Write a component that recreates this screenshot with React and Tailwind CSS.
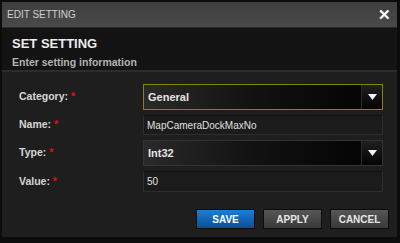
import React from 'react';

const font = { fontFamily: '"Liberation Sans", Arial, sans-serif' };

// Étiquette de champ avec astérisque rouge
const Label = ({ children }) => (
  <div className="w-[141px] pl-[17px] text-[10.5px] font-bold text-[#d6d6d6]">
    {children}: <span className="text-[#e01010]">*</span>
  </div>
);

const Arrow = () => (
  <div className="flex h-full w-[21px] items-center justify-center bg-gradient-to-b from-[#202020] to-[#050505] border-l border-[#2a2a2a]">
    <svg width="9" height="6" viewBox="0 0 9 6">
      <path d="M0 0 H9 L4.5 6 Z" fill="#f2f2f2" />
    </svg>
  </div>
);

const Select = ({ value, active }) => (
  <div
    className={
      'flex h-full w-[240px] items-stretch ' +
      (active ? 'border border-[#8c7e12]' : 'border border-[#333]')
    }
  >
    <div className="flex flex-1 items-center bg-gradient-to-r from-[#2a2a2a] via-[#121212] to-[#050505] pl-[4px] text-[11px] font-bold text-[#e4e4e4]">
      {value}
    </div>
    <Arrow />
  </div>
);

const Input = ({ value }) => (
  <div className="flex h-full w-[240px] items-center border border-[#2e2e2e] border-t-[#111] bg-[#1b1b1b] pl-[3px] text-[10px] text-[#e0e0e0]">
    {value}
  </div>
);

const Button = ({ children, primary }) => (
  <div
    className={
      'flex h-[20px] w-[59px] items-center justify-center border border-[#0c0c0c] text-[10px] font-bold ' +
      (primary
        ? 'bg-gradient-to-b from-[#1d7fd4] to-[#0b4e96] text-white'
        : 'bg-gradient-to-b from-[#575757] to-[#393939] text-[#e6e6e6]')
    }
  >
    {children}
  </div>
);

export default function App() {
  return (
    <div style={font} className="h-[243px] w-[400px] overflow-hidden bg-[#0c0c0c] p-[2px] pb-[6px] pr-[3px]">
      <div className="flex h-full flex-col bg-[#1e1e1e]">
        {/* barra de título */}
        <div className="flex h-[26px] items-center justify-between bg-gradient-to-b from-[#3e3e3e] to-[#4a4a4a] pl-[5px] pr-[6px] border-b border-[#2a2a2a]">
          <span className="text-[10px] text-[#d0d0d0]">EDIT SETTING</span>
          <span className="text-[15px] font-bold leading-none text-white">✕</span>
        </div>

        {/* cabeçalho */}
        <div className="flex h-[44px] flex-col bg-[#131313] pl-[10px] pt-[8px] border-b-2 border-[#2c2c2c]">
          <div className="text-[13px] font-bold leading-[16px] text-[#ececec]">SET SETTING</div>
          <div className="mt-[3px] text-[10.5px] font-bold leading-[14px] text-[#b4b4b4]">Enter setting information</div>
        </div>

        {/* formulário */}
        <div className="flex flex-1 flex-col pt-[12px]">
          <div className="flex h-[26px] items-center">
            <Label>Category</Label>
            <Select value="General" active />
          </div>
          <div className="mt-[5px] flex h-[20px] items-center">
            <Label>Name</Label>
            <Input value="MapCameraDockMaxNo" />
          </div>
          <div className="mt-[5px] flex h-[26px] items-center">
            <Label>Type</Label>
            <Select value="Int32" />
          </div>
          <div className="mt-[5px] flex h-[21px] items-center">
            <Label>Value</Label>
            <Input value="50" />
          </div>

          <div className="mt-[17px] flex justify-end gap-[8px] pr-[8px]">
            <Button primary>SAVE</Button>
            <Button>APPLY</Button>
            <Button>CANCEL</Button>
          </div>
        </div>
      </div>
    </div>
  );
}
